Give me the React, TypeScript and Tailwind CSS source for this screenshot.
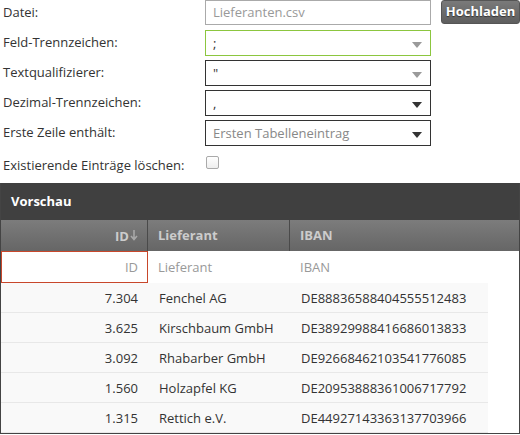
import React from 'react';

const rows = [
  { id: '7.304', name: 'Fenchel AG', iban: 'DE88836588404555512483' },
  { id: '3.625', name: 'Kirschbaum GmbH', iban: 'DE38929988416686013833' },
  { id: '3.092', name: 'Rhabarber GmbH', iban: 'DE92668462103541776085' },
  { id: '1.560', name: 'Holzapfel KG', iban: 'DE20953888361006717792' },
  { id: '1.315', name: 'Rettich e.V.', iban: 'DE44927143363137703966' },
];

function Caret({ dark }: { dark?: boolean }) {
  return (
    <svg width="10" height="6" viewBox="0 0 10 6" className="absolute right-[8px] top-[11px]">
      <path d="M0 0H10L5 6Z" fill={dark ? '#333' : '#9a9a9a'} />
    </svg>
  );
}

function Select({ value, border, dark, muted }: { value: string; border: string; dark?: boolean; muted?: boolean }) {
  return (
    <div className={`relative h-[26px] w-[226px] border ${border} bg-white pl-[7px] text-[13px] leading-[24px] ${muted ? 'text-[#888]' : 'text-[#333]'}`}>
      {value}
      <Caret dark={dark} />
    </div>
  );
}

export default function App() {
  const label = 'h-[30px] leading-[24px] text-[13px] text-[#333]';
  return (
    <div className="w-[520px] h-[435px] overflow-hidden bg-white font-['Open_Sans',sans-serif] text-[#333]">
      <div className="flex">
        <div className="w-[205px] pl-[3px]">
          <div className={label}>Datei:</div>
          <div className={label}>Feld-Trennzeichen:</div>
          <div className={label}>Textqualifizierer:</div>
          <div className={label}>Dezimal-Trennzeichen:</div>
          <div className={label}>Erste Zeile enthält:</div>
          <div className="h-[30px] leading-[30px] text-[13px] text-[#333]">Existierende Einträge löschen:</div>
        </div>
        <div className="flex flex-col gap-[4px]">
          <div className="flex gap-[10px]">
            <div className="h-[25px] w-[226px] border border-[#aaa] bg-white pl-[7px] text-[13px] leading-[23px] text-[#999]">Lieferanten.csv</div>
            <div className="h-[24px] w-[79px] rounded-[3px] border border-[#555] bg-gradient-to-b from-[#7a7a7a] to-[#5e5e5e] text-center text-[13px] font-bold leading-[21px] text-white [text-shadow:0_1px_1px_#333]">Hochladen</div>
          </div>
          <div className="flex flex-col gap-[4px] pt-[1px]">
            <Select value=";" border="border-[#8cc63f]" />
            <Select value={'"'} border="border-[#333]" />
            <Select value="," border="border-[#333]" dark />
            <Select value="Ersten Tabelleneintrag" border="border-[#333]" dark muted />
          </div>
          <div className="mt-[6px] ml-[1px] h-[13px] w-[13px] rounded-[2px] border border-[#aaa] bg-gradient-to-b from-white to-[#eee]" />
        </div>
      </div>

      <div className="mt-[3px] border-x border-b border-[#444]">
        <div className="h-[37px] bg-[#404040] pl-[10px] text-[13px] font-bold leading-[36px] text-white">Vorschau</div>
        <div className="grid h-[31px] grid-cols-[147px_142px_1fr] bg-gradient-to-b from-[#7c7c7c] to-[#666] text-[13px] font-bold leading-[30px] text-[#ccc]">
          <div className="flex items-center justify-end gap-[1px] border-r border-[#4a4a4a] pr-[9px]">
            ID
            <svg width="8" height="11" viewBox="0 0 8 11">
              <path d="M4 0V9M1 6L4 9.5L7 6" stroke="#a8a8a8" strokeWidth="1.6" fill="none" />
            </svg>
          </div>
          <div className="border-r border-[#4a4a4a] pl-[10px]">Lieferant</div>
          <div className="pl-[10px]">IBAN</div>
        </div>
        <div className="grid h-[32px] grid-cols-[147px_142px_1fr] bg-white text-[13px] leading-[30px] text-[#999]">
          <div className="border border-[#c8472b] pr-[9px] text-right">ID</div>
          <div className="pl-[10px] pt-[1px]">Lieferant</div>
          <div className="pl-[10px] pt-[1px]">IBAN</div>
        </div>
        {rows.map((r) => (
          <div key={r.id} className="grid h-[30px] w-[487px] grid-cols-[147px_142px_1fr] border-b border-[#e8e8e8] bg-[#f9f9f9] text-[13px] leading-[30px] text-[#333]">
            <div className="pr-[10px] text-right">{r.id}</div>
            <div className="pl-[11px]">{r.name}</div>
            <div className="pl-[11px]">{r.iban}</div>
          </div>
        ))}
      </div>
    </div>
  );
}
